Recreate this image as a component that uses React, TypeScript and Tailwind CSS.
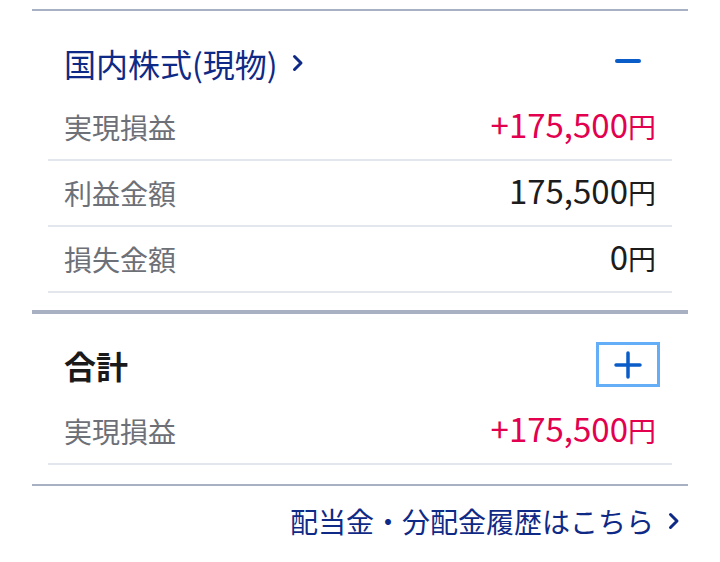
import React from "react";

const font = { fontFamily: '"Noto Sans CJK JP", "Noto Sans", sans-serif' };

const Chevron = ({ className = "" }: { className?: string }) => (
  <svg width="12" height="18" viewBox="0 0 12 18" fill="none" className={className}>
    <path d="M2.5 2.5 L9 9 L2.5 15.5" stroke="currentColor" strokeWidth="3" strokeLinecap="round" strokeLinejoin="round" />
  </svg>
);

type Row = { label: string; value: string; tone: "red" | "black" };

// 金額は数字部分だけ少し大きめ
const Amount = ({ value }: { value: string }) => {
  const num = value.replace("円", "");
  return (
    <span className="flex -translate-y-[3px] items-baseline">
      <span className="text-[33px] leading-none">{num}</span>
      <span className="text-[28px] leading-none">円</span>
    </span>
  );
};

const Rows = ({ rows }: { rows: Row[] }) => (
  <div className="mx-4">
    {rows.map((r) => (
      <div key={r.label} className="flex h-[66px] items-center justify-between border-b-2 border-[#e3e7ed] px-4">
        <span className="text-[28px] text-[#6d7077]">{r.label}</span>
        <span className={r.tone === "red" ? "text-[#e2004f]" : "text-[#1c1c1c]"}>
          <Amount value={r.value} />
        </span>
      </div>
    ))}
  </div>
);

const App = () => {
  return (
    <div className="h-[562px] w-[720px] bg-white px-8 pt-[9px]" style={font}>
      {/* 国内株式 */}
      <section className="border-t-2 border-[#a8b1c3] pb-[17px]">
        <div className="mx-4 mb-[10px] mt-[29px] flex h-[45px] items-center justify-between pl-4 pr-3">
          <a className="flex items-center gap-[14px] text-[32px] text-[#0f2a86]">
            国内株式(現物)
            <Chevron />
          </a>
          <button className="flex h-[45px] w-16 items-center justify-center">
            <span className="block h-[4px] w-[26px] -translate-y-[2px] rounded-full bg-[#0a5cc8]" />
          </button>
        </div>
        <Rows
          rows={[
            { label: "実現損益", value: "+175,500円", tone: "red" },
            { label: "利益金額", value: "175,500円", tone: "black" },
            { label: "損失金額", value: "0円", tone: "black" },
          ]}
        />
      </section>

      {/* 合計 */}
      <section className="border-t-4 border-[#a8b1c3] pb-[19px]">
        <div className="mx-4 mb-[12px] mt-[28px] flex h-[45px] items-center justify-between pl-4 pr-3">
          <span className="text-[32px] font-bold text-[#1a1a1a]">合計</span>
          <button className="flex h-[45px] w-16 items-center justify-center border-[3px] border-[#63aef7]">
            <svg width="28" height="28" viewBox="0 0 28 28">
              <path d="M2 14 H26 M14 2 V26" stroke="#0a5cc8" strokeWidth="3.5" strokeLinecap="round" />
            </svg>
          </button>
        </div>
        <Rows rows={[{ label: "実現損益", value: "+175,500円", tone: "red" }]} />
      </section>

      <div className="flex justify-end border-t-2 border-[#a8b1c3] pr-2 pt-[14px]">
        <a className="flex items-center gap-[14px] text-[28px] text-[#0f2a86]">
          配当金・分配金履歴はこちら
          <Chevron />
        </a>
      </div>
    </div>
  );
};

export default App;
